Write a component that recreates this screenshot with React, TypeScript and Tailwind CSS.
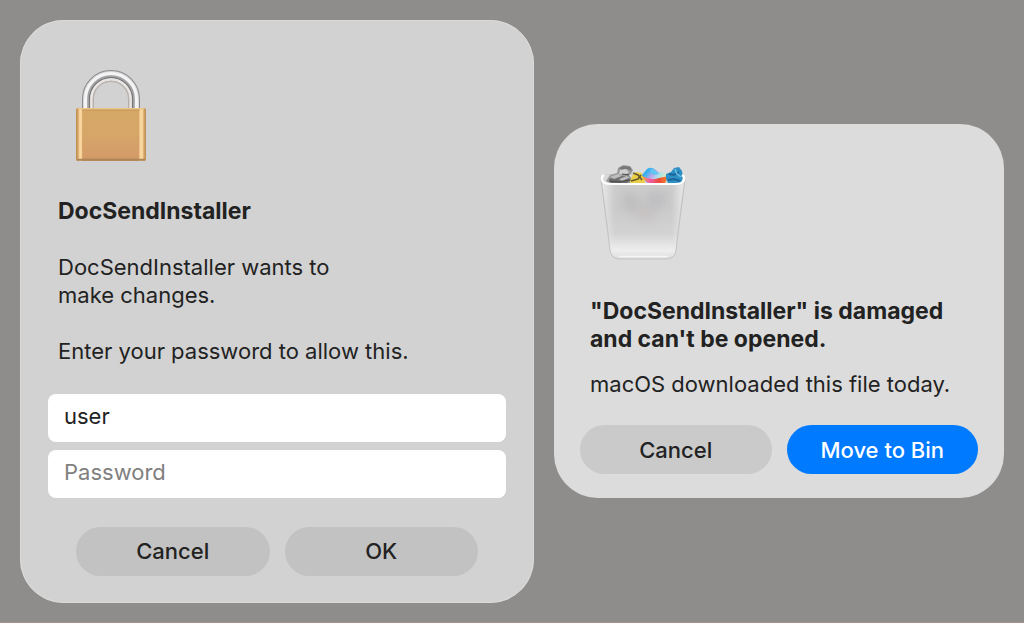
import { ReactNode } from "react";

function LockIcon() {
  return (
    <svg viewBox="0 0 76 96" className="block h-24 w-[76px]" aria-hidden="true">
      <defs>
        <linearGradient id="lock-body" x1="0" y1="0" x2="0" y2="1">
          <stop offset="0" stopColor="#d6a866" />
          <stop offset="0.5" stopColor="#d5a668" />
          <stop offset="0.88" stopColor="#d49c69" />
          <stop offset="1" stopColor="#cd9762" />
        </linearGradient>
        <linearGradient id="lock-edge" x1="0" y1="0" x2="1" y2="0">
          <stop offset="0" stopColor="#b98a50" />
          <stop offset="0.03" stopColor="#d8a768" />
          <stop offset="0.055" stopColor="#fbdda6" />
          <stop offset="0.08" stopColor="#f6cf98" />
          <stop offset="0.1" stopColor="#d2a063" stopOpacity="0" />
          <stop offset="0.89" stopColor="#d2a063" stopOpacity="0" />
          <stop offset="0.91" stopColor="#f6cf98" />
          <stop offset="0.945" stopColor="#fbdda6" />
          <stop offset="0.97" stopColor="#d8a768" />
          <stop offset="1" stopColor="#b98a50" />
        </linearGradient>
      </defs>
      {/* shackle, outer rim first */}
      <g fill="none">
        <path d="M14.500 42V30a23.500 23.500 0 0 1 47 0v12" stroke="#8a8b90" strokeWidth="11" />
        <path d="M14.500 42V30a23.500 23.500 0 0 1 47 0v12" stroke="#d9d9d9" strokeWidth="9" />
        <path d="M12.500 42V30a25.500 25.500 0 0 1 51 0v12" stroke="#f4f4f4" strokeWidth="3" />
        <path d="M15 42V30a23 23 0 0 1 46 0v12" stroke="#a3a3a5" strokeWidth="1.500" />
        <path d="M16.500 42V30a21.500 21.500 0 0 1 43 0v12" stroke="#77777a" strokeWidth="1.500" />
        <path d="M18.500 42V30a19.500 19.500 0 0 1 39 0v12" stroke="#e9e5e2" strokeWidth="2.500" />
        <path d="M20.500 42V30a17.500 17.500 0 0 1 35 0v12" stroke="#b9aea8" strokeWidth="1" />
      </g>
      <rect x="3" y="39" width="70" height="53" rx="2.500" fill="url(#lock-body)" />
      <rect x="3" y="39" width="70" height="53" rx="2.500" fill="url(#lock-edge)" />
      <path d="M5 39.700h66" stroke="#e9c38a" strokeWidth="1.400" />
      <path d="M9 41.200h58" stroke="#b98a50" strokeWidth="1" opacity="0.600" />
      <path d="M4 90.800h68" stroke="#ad8557" strokeWidth="2" />
    </svg>
  );
}

function BinIcon() {
  return (
    <svg viewBox="0 0 96 108" className="block h-[108px] w-24" aria-hidden="true">
      <defs>
        <linearGradient id="bin-body" x1="0" y1="0" x2="0" y2="1">
          <stop offset="0" stopColor="#cecece" />
          <stop offset="0.4" stopColor="#cacaca" />
          <stop offset="0.7" stopColor="#d3d3d3" />
          <stop offset="0.9" stopColor="#eeeeee" />
          <stop offset="1" stopColor="#dcdcdc" />
        </linearGradient>
        <linearGradient id="bin-side" x1="0" y1="0" x2="1" y2="0">
          <stop offset="0" stopColor="#f2f2f2" stopOpacity="0.8" />
          <stop offset="0.16" stopColor="#e6e6e6" stopOpacity="0" />
          <stop offset="0.84" stopColor="#e6e6e6" stopOpacity="0" />
          <stop offset="1" stopColor="#f2f2f2" stopOpacity="0.8" />
        </linearGradient>
        <linearGradient id="bin-ball" x1="0" y1="0" x2="1" y2="0.5">
          <stop offset="0" stopColor="#1d9bf0" />
          <stop offset="0.3" stopColor="#45b4ee" />
          <stop offset="0.5" stopColor="#c6a4ea" />
          <stop offset="0.7" stopColor="#a5e6ea" />
          <stop offset="1" stopColor="#f3e6a8" />
        </linearGradient>
        <linearGradient id="bin-band" x1="0" y1="0" x2="1" y2="0">
          <stop offset="0" stopColor="#f4a52c" />
          <stop offset="0.3" stopColor="#ef5aa8" />
          <stop offset="0.65" stopColor="#ee4a36" />
          <stop offset="1" stopColor="#f3922b" />
        </linearGradient>
        <filter id="bin-soft" x="-30%" y="-30%" width="160%" height="160%">
          <feGaussianBlur stdDeviation="4" />
        </filter>
      </defs>
      <path
        d="M6 19q0-5 7-5h70q7 0 7 5l-1 7-8 63q-1 9-10 9H25q-9 0-10-9L7 26z"
        fill="url(#bin-body)"
        stroke="#c3c3c3"
        strokeWidth="1"
      />
      <path d="M7 20h82l-9 69q-1 8-9 8H25q-8 0-9-8z" fill="url(#bin-side)" />
      <g filter="url(#bin-soft)" opacity="0.400">
        <path d="M26 30l18 4 4 20-18-4z" fill="#aeaeb0" />
        <path d="M52 30h22l-6 16H50z" fill="#adadb4" />
        <path d="M36 44l28 4-8 14-14-4z" fill="#bfb5b6" />
      </g>
      <rect x="7" y="14" width="82" height="9" rx="4" fill="#dadada" />
      {/* crumpled paper */}
      <path d="M11 20l4-6 7-2 1-5 5-3 7 1 3 4-2 4-2 1 3 4-2 4H14z" fill="#9a9a9a" />
      <path d="M24 7l5-2 6 1 2 4-5-2-5 1z" fill="#777777" />
      <path d="M25 9l6-1 3 3-4 3-6-1z" fill="#cfcfcf" />
      <path d="M14 18l8-4 10 2 4 3-4 3H16z" fill="#6f6f6f" />
      <path d="M15 16l8-3 4 2-8 3zM24 18l8-3 2 2-7 3z" fill="#bdbdbd" />
      <path d="M27 13l7 1M14 20l10 1 11-2" stroke="#484848" strokeWidth="1.200" fill="none" />
      {/* yellow scrap */}
      <path d="M35 21l2-6 4-4 6 1 2 5 1 5-14 1z" fill="#ead048" />
      <path d="M38 12l5 2 4 5M36 20l7-2 3-4" stroke="#6b5c2c" strokeWidth="1.800" fill="none" />
      {/* beach ball */}
      <path d="M47 14l5-6q4-3 9 1 5 4 12 3l1 5-6 6H52z" fill="url(#bin-ball)" />
      <path d="M47 15q9 5 17 2l10-2-4 7H54q-5-2-7-7z" fill="url(#bin-band)" />
      <path d="M55 9q3-2 6 1l3 3-6 1z" fill="#5fc8f2" />
      {/* blue can */}
      <path d="M71 13l5-2 3-4 5-1 3 4 1 6-2 6H73l-2-4z" fill="#2c8fc6" />
      <path d="M74 13l5 1 5-3M73 19l6-1 6 2" stroke="#1a6598" strokeWidth="2" fill="none" />
      <path d="M80 8l2 5 4 3" stroke="#6dbfe0" strokeWidth="1.500" fill="none" />
      <path
        d="M9 14q-3 2-2 5 1 4 9 4h64q8 0 9-4 1-3-2-5"
        fill="none"
        stroke="#ffffff"
        strokeWidth="2.200"
      />
      <path d="M24 95.500h48" stroke="#f6f6f6" strokeWidth="1.500" strokeLinecap="round" />
    </svg>
  );
}

type DialogButtonProps = {
  children: ReactNode;
  className: string;
};

function DialogButton({ children, className }: DialogButtonProps) {
  return (
    <button
      type="button"
      className={`h-[49px] flex-1 rounded-full text-[22px] leading-7 font-medium ${className}`}
    >
      {children}
    </button>
  );
}

function PasswordDialog() {
  return (
    <form
      role="dialog"
      aria-labelledby="password-title"
      className="rounded-[44px] bg-[#d2d2d2] px-7 pt-[49px] pb-[27px] shadow-[inset_0_0_0_1px_#dadad8]"
    >
      <div className="pl-[25px]">
        <LockIcon />
      </div>
      <div className="mt-8 pl-[10px] leading-7">
        <h1 id="password-title" className="text-[23px] leading-7 font-bold">DocSendInstaller</h1>
        <p className="mt-7">
          DocSendInstaller wants to
          <br />
          make changes.
        </p>
        <p className="mt-7">Enter your password to allow this.</p>
      </div>
      <div className="mt-[29px] flex flex-col gap-2">
        <input
          type="text"
          aria-label="User name"
          defaultValue="user"
          className="h-12 w-full rounded-lg bg-white px-4 pb-1 outline-none"
        />
        <input
          type="password"
          aria-label="Password"
          placeholder="Password"
          className="h-12 w-full rounded-lg bg-white px-4 pb-1 outline-none placeholder:text-[#808080]"
        />
      </div>
      <div className="mt-[29px] flex gap-[15px] px-7">
        <DialogButton className="bg-[#c2c2c2]">Cancel</DialogButton>
        <DialogButton className="bg-[#c2c2c2]">OK</DialogButton>
      </div>
    </form>
  );
}

function DamagedDialog() {
  return (
    <section
      role="alertdialog"
      aria-labelledby="damaged-title"
      className="rounded-[44px] bg-[#dcdcdc] px-[26px] pt-[37px] pb-6"
    >
      <div className="pl-[15px]">
        <BinIcon />
      </div>
      <div className="mt-7 pl-[10px] leading-7">
        <h2 id="damaged-title" className="text-[23px] leading-7 font-bold">
          "DocSendInstaller" is damaged
          <br />
          and can't be opened.
        </h2>
        <p className="mt-[17px]">macOS downloaded this file today.</p>
      </div>
      <div className="mt-[27px] flex gap-[15px]">
        <DialogButton className="bg-[#cacaca]">Cancel</DialogButton>
        <DialogButton className="bg-[#007aff] text-white">Move to Bin</DialogButton>
      </div>
    </section>
  );
}

export default function App() {
  return (
    <main className="grid min-h-screen grid-cols-[514fr_450fr] items-center gap-5 border-b border-[#ab8f8b] bg-[#8e8d8b] px-5 font-['Inter','Liberation_Sans',sans-serif] text-[22px] text-[#222222]">
      <PasswordDialog />
      <DamagedDialog />
    </main>
  );
}
